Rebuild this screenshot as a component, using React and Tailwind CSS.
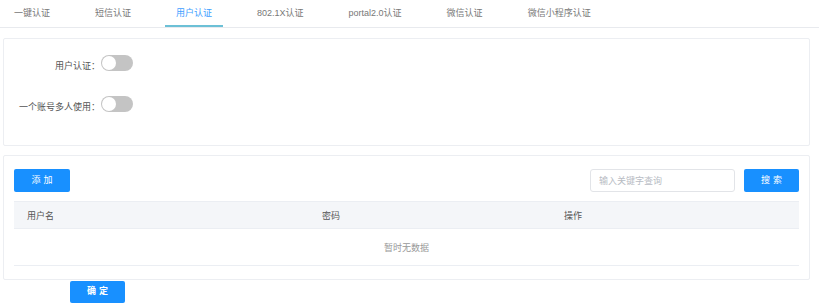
import React, { useState } from 'react';

const tabs = ['一键认证', '短信认证', '用户认证', '802.1X认证', 'portal2.0认证', '微信认证', '微信小程序认证'];

const font = { fontFamily: '"Liberation Sans", "Noto Sans CJK SC", sans-serif' };

const Toggle = ({ on, onChange }) => (
  <button
    onClick={() => onChange(!on)}
    className={`relative w-[32px] h-[16px] rounded-full ${on ? 'bg-[#1890ff]' : 'bg-[#c4c4c4]'}`}
  >
    <span
      className={`absolute top-[1px] w-[14px] h-[14px] rounded-full bg-white ${on ? 'left-[17px]' : 'left-[1px]'}`}
    />
  </button>
);

export default function App() {
  const [active, setActive] = useState(2);
  const [userAuth, setUserAuth] = useState(false);
  const [multiUse, setMultiUse] = useState(false);

  return (
    <div className="w-[819px] h-[308px] bg-white text-[9px] text-[#606266] overflow-hidden" style={font}>
      {/* tabs */}
      <div className="flex gap-[23px] pl-[3px] h-[28px] border-b border-[#e8eaee]">
        {tabs.map((t, i) => (
          <div
            key={t}
            onClick={() => setActive(i)}
            className={`px-[11px] h-[27px] flex items-center pt-[2px] cursor-pointer border-b-2 ${
              i === active ? 'text-[#409eff] border-[#6cc0d6]' : 'text-[#777] border-transparent'
            }`}
          >
            {t}
          </div>
        ))}
      </div>

      {/* settings panel */}
      <div className="ml-[3px] mt-[10px] w-[807px] h-[108px] border border-[#eceef2] rounded-[2px] pt-[18px]">
        <div className="flex items-center h-[16px]">
          <div className="w-[96px] text-right text-[#555] pt-[3px]">用户认证：</div>
          <div className="ml-[1px]">
            <Toggle on={userAuth} onChange={setUserAuth} />
          </div>
        </div>
        <div className="flex items-center h-[16px] mt-[25px]">
          <div className="w-[96px] text-right text-[#555] pt-[3px]">一个账号多人使用：</div>
          <div className="ml-[1px]">
            <Toggle on={multiUse} onChange={setMultiUse} />
          </div>
        </div>
      </div>

      {/* user list panel */}
      <div className="ml-[3px] mt-[9px] w-[807px] h-[125px] border border-[#eceef2] rounded-[2px] px-[10px] pt-[13px]">
        <div className="flex items-center">
          <button className="w-[56px] h-[23px] bg-[#1890ff] text-white rounded-[2px] tracking-[3px] pl-[3px]">
            添加
          </button>
          <input
            placeholder="输入关键字查询"
            className="ml-auto w-[145px] h-[23px] border border-[#e2e4e8] rounded-[3px] px-[8px] text-[9px] outline-none placeholder:text-[#b8bcc4]"
          />
          <button className="ml-[9px] w-[55px] h-[23px] bg-[#1890ff] text-white rounded-[2px] tracking-[3px] pl-[3px]">
            搜索
          </button>
        </div>

        <div className="mt-[9px]">
          <div className="grid grid-cols-[295px_242px_1fr] h-[28px] items-center pt-[3px] bg-[#f4f6f9] border-y border-[#ebeef3] text-[#555]">
            <div className="pl-[13px]">用户名</div>
            <div className="pl-[13px]">密码</div>
            <div className="pl-[13px]">操作</div>
          </div>
          <div className="h-[37px] flex items-center justify-center pt-[4px] border-b border-[#ebeef3] text-[#999]">
            暂时无数据
          </div>
        </div>
      </div>

      <button className="ml-[70px] mt-[1px] w-[55px] h-[22px] bg-[#1890ff] text-white rounded-[2px] tracking-[3px] pl-[3px] font-bold">
        确定
      </button>
    </div>
  );
}
